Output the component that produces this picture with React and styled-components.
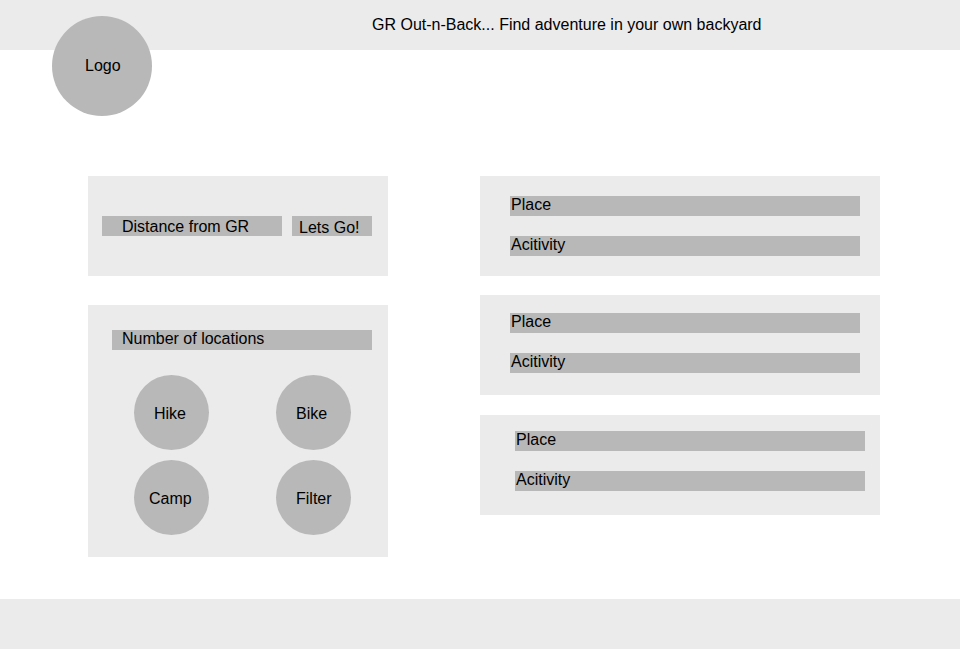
import React from 'react';
import styled, { createGlobalStyle } from 'styled-components';

const GlobalStyle = createGlobalStyle`
  * { box-sizing: border-box; }
  body {
    margin: 0;
    background: #fff;
    color: #000;
    font: 16px/18px "Liberation Sans", Arial, sans-serif;
  }
`;

const Page = styled.div`
  height: 649px;
  display: flex;
  flex-direction: column;
`;

const Header = styled.header`
  display: flex;
  align-items: flex-start;
  height: 50px;
  flex: none;
  padding: 16px 0 0 52px;
  background: #ebebeb;
`;

const Circle = styled.div`
  flex: none;
  width: ${(p) => p.$size}px;
  height: ${(p) => p.$size}px;
  padding: ${(p) => p.$top}px 0 0 ${(p) => p.$left}px;
  border-radius: 50%;
  background: #b8b8b8;
  white-space: nowrap;
`;

const Title = styled.h1`
  margin: 0 0 0 220px;
  font-size: 16px;
  font-weight: 400;
  line-height: 18px;
`;

const Main = styled.main`
  flex: 1;
  display: grid;
  grid-template-columns: 300px 400px;
  column-gap: 92px;
  align-items: start;
  padding: 126px 0 0 88px;
`;

const Sidebar = styled.div`
  display: grid;
  gap: 29px;
`;

const SearchPanel = styled.section`
  display: flex;
  gap: 10px;
  height: 100px;
  padding: 40px 16px 0 14px;
  background: #ebebeb;
`;

const FilterPanel = styled.section`
  height: 252px;
  padding: 25px 16px 0 24px;
  background: #ebebeb;
`;

const Bar = styled.div`
  width: ${(p) => p.$width}px;
  height: 20px;
  padding: ${(p) => p.$top || 0}px 0 0 ${(p) => p.$left}px;
  background: #b8b8b8;
  white-space: nowrap;
`;

const Activities = styled.div`
  display: grid;
  grid-template-columns: 75px 75px;
  gap: 10px 67px;
  padding: 25px 0 0 22px;
`;

const Results = styled.div`
  display: flex;
  flex-direction: column;
`;

const ResultCard = styled.article`
  display: flex;
  flex-direction: column;
  gap: 20px;
  height: 100px;
  margin-bottom: ${(p) => p.$after}px;
  padding: ${(p) => p.$top}px 0 0 ${(p) => p.$left}px;
  background: #ebebeb;
`;

const Footer = styled.footer`
  flex: none;
  height: 50px;
  background: #ebebeb;
`;

const activities = [
  { label: 'Hike', left: 20 },
  { label: 'Bike', left: 20 },
  { label: 'Camp', left: 15 },
  { label: 'Filter', left: 20 },
];

const results = [
  { top: 20, left: 30, after: 19 },
  { top: 18, left: 30, after: 20 },
  { top: 16, left: 35, after: 0 },
];

export default function App() {
  return (
    <Page>
      <GlobalStyle />
      <Header>
        <Circle $size={100} $top={41} $left={33}>Logo</Circle>
        <Title>GR Out-n-Back... Find adventure in your own backyard</Title>
      </Header>
      <Main>
        <Sidebar>
          <SearchPanel>
            <Bar $width={180} $left={20} $top={2}>Distance from GR</Bar>
            <Bar $width={80} $left={7} $top={3}>Lets Go!</Bar>
          </SearchPanel>
          <FilterPanel>
            <Bar $width={260} $left={10}>Number of locations</Bar>
            <Activities>
              {activities.map((a) => (
                <Circle key={a.label} $size={75} $top={30} $left={a.left}>{a.label}</Circle>
              ))}
            </Activities>
          </FilterPanel>
        </Sidebar>
        <Results>
          {results.map((r) => (
            <ResultCard key={r.top} $top={r.top} $left={r.left} $after={r.after}>
              <Bar $width={350} $left={1}>Place</Bar>
              <Bar $width={350} $left={1}>Acitivity</Bar>
            </ResultCard>
          ))}
        </Results>
      </Main>
      <Footer />
    </Page>
  );
}
